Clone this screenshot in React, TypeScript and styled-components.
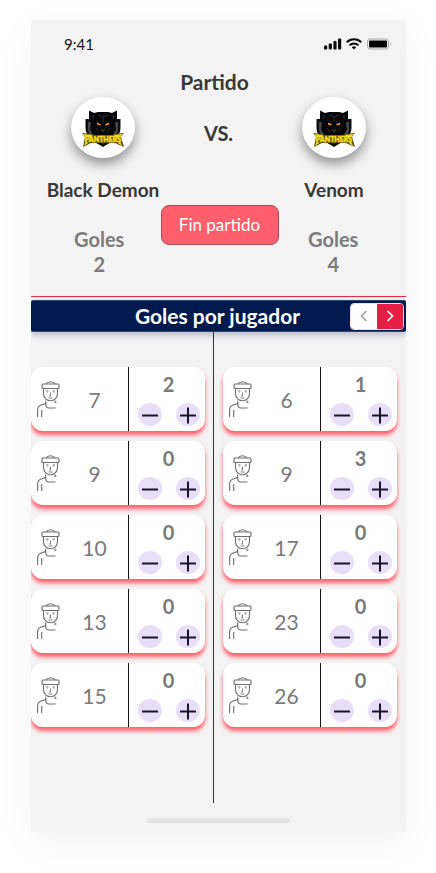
import React, { useState } from "react";
import styled, { createGlobalStyle } from "styled-components";

const GlobalStyle = createGlobalStyle`
  *, *::before, *::after { box-sizing: border-box; }
  body { margin: 0; background: #fff; font-family: Lato, "Open Sans", sans-serif; }
  button { font: inherit; cursor: pointer; }
  h1, h2, h3, p, ul { margin: 0; padding: 0; }
`;

const Page = styled.div`
  min-height: 100vh;
  padding: 20px 30px 41px 31px;
  display: flex;
`;

const Screen = styled.main`
  flex: 1;
  min-width: 0;
  display: flex;
  flex-direction: column;
  background: #f3f3f3;
  border-radius: 2px;
  box-shadow: 0 10px 40px rgba(0, 0, 0, 0.05);
  overflow: hidden;
`;

const StatusBar = styled.header`
  display: flex;
  align-items: center;
  justify-content: space-between;
  height: 44px;
  padding: 4px 14px 0 33px;
  font-size: 15px;
  line-height: 20px;
  color: #111;
`;

const StatusIcons = styled.svg`
  display: block;
  width: 68px;
  height: 14px;
`;

const Title = styled.h1`
  height: 33px;
  padding-right: 8px;
  font-size: 21px;
  line-height: 36px;
  font-weight: 700;
  text-align: center;
  color: #383838;
`;

const Teams = styled.section`
  display: grid;
  grid-template-columns: 144fr 87fr 144fr;
`;

const Team = styled.div`
  display: flex;
  flex-direction: column;
  align-items: center;
  gap: 20px;
`;

const Badge = styled.div`
  display: grid;
  place-items: center;
  width: 64px;
  height: 61px;
  border-radius: 50%;
  background: #fff;
  box-shadow: 0 6px 12px rgba(0, 0, 0, 0.4);
`;

const TeamName = styled.h2`
  font-size: 19px;
  line-height: 24px;
  font-weight: 700;
  color: #383838;
  white-space: nowrap;
`;

const Versus = styled.p`
  padding-top: 24px;
  font-size: 20px;
  line-height: 24px;
  font-weight: 700;
  text-align: center;
  color: #383838;
`;

const Scores = styled.section`
  display: grid;
  grid-template-columns: 1fr 118px 1fr;
  align-items: start;
  padding: 3px 0 19px 2px;
  border-bottom: 1px solid #e8294a;
`;

const TeamGoals = styled.p<{ $side: "home" | "away" }>`
  display: flex;
  flex-direction: column;
  padding: ${(p) => (p.$side === "home" ? "22px 0 0 5px" : "22px 18px 0 0")};
  font-size: 20px;
  line-height: 25px;
  font-weight: 700;
  text-align: center;
  color: #7b7b7b;
`;

const EndButton = styled.button`
  height: 40px;
  padding: 0;
  border: 1px solid #a84b54;
  border-radius: 8px;
  background: #ff5f6d;
  color: #fff;
  font-size: 17px;
  line-height: 24px;
`;

const SectionBar = styled.div`
  display: grid;
  grid-template-columns: 1fr auto 1fr;
  align-items: center;
  height: 32px;
  margin-top: 3px;
  padding-right: 2px;
  border: solid #33456f;
  border-width: 1px 0;
  border-radius: 2px;
  background: #001a4f;
  box-shadow: 0 3px 6px rgba(0, 20, 60, 0.25);
`;

const SectionTitle = styled.h2`
  grid-column: 2;
  font-size: 21px;
  line-height: 28px;
  font-weight: 700;
  color: #fff;
`;

const Pager = styled.div`
  display: flex;
  justify-self: end;
  border: 1px solid #f4dbe2;
  border-radius: 4px;
  overflow: hidden;
`;

const PagerButton = styled.button<{ $active?: boolean }>`
  display: grid;
  place-items: center;
  width: 26px;
  height: 25px;
  padding: 0;
  border: 0;
  background: ${(p) => (p.$active ? "#e61e43" : "#fff")};
  color: ${(p) => (p.$active ? "#fff" : "#a3a3a3")};
`;

const Lineups = styled.section`
  flex: 1;
  display: grid;
  grid-template-columns: 183fr 192fr;
`;

const Lineup = styled.ul<{ $divided?: boolean }>`
  display: flex;
  flex-direction: column;
  gap: 10px;
  padding: ${(p) => (p.$divided ? "35px 8px 72px 0" : "35px 9px 72px 9px")};
  border-right: ${(p) => (p.$divided ? "1px solid #333" : "0")};
  list-style: none;
`;

const PlayerCard = styled.li`
  display: grid;
  grid-template-columns: 98fr 76fr;
  height: 64px;
  border-radius: 12px;
  background: #fff;
  color: #7a7a7a;
  box-shadow: 0 4px 4px #ff5f6d;
`;

const Player = styled.div`
  display: grid;
  grid-template-columns: 32px 1fr;
  align-items: center;
  padding-left: 6px;
  border-right: 1px solid #111;
`;

const Shirt = styled.p`
  padding: 2px 8px 0 0;
  font-size: 21px;
  line-height: 24px;
  text-align: center;
`;

const Tally = styled.div`
  display: flex;
  flex-direction: column;
  align-items: center;
  gap: 7px;
  padding: 5px 0 0 3px;
`;

const Goals = styled.output`
  font-size: 20px;
  line-height: 24px;
  font-weight: 700;
`;

const Stepper = styled.div`
  display: flex;
  gap: 14px;
`;

const StepButton = styled.button`
  display: grid;
  place-items: center;
  width: 24px;
  height: 23px;
  padding: 0;
  border: 0;
  border-radius: 50%;
  background: #e8def8;
  color: #1d1329;
`;

const Footer = styled.footer`
  display: flex;
  justify-content: center;
  padding: 15px 0 9px;
`;

const HomeIndicator = styled.div`
  width: 38%;
  height: 5px;
  border-radius: 3px;
  background: #e4e4e4;
`;

const PantherLogo = () => (
  <svg width="44" height="40" viewBox="0 0 44 40" role="img" aria-label="Panthers">
    <path d="M4.500 11h35v9c0 9-9 14-17.500 19C13.500 34 4.500 29 4.500 20z" fill="#0c0f12" />
    <path d="M7 14h30v7c0 6-7 11-15 15C14 32 7 27 7 21z" fill="#45474a" />
    <path d="M8 2.500l5 2.500 4-1h10l4 1 5-2.500v9l-2 4 1 6-5 8-5 3h-6l-5-3-5-8 1-6-2-4z" fill="#050607" />
    <path d="M10.500 7l3 1-2 3zM33.500 7l-3 1 2 3z" fill="#25282b" />
    <path d="M17 7l5 2 5-2M22 9v5M15 20l3 4M29 20l-3 4" fill="none" stroke="#2b2e31" />
    <path d="M16 14.500l4 2-1 1-3-1zM28 14.500l-4 2 1 1 3-1z" fill="#f79a3b" />
    <path d="M19 21h6l-2 3h-2z" fill="#25282b" />
    <path d="M1 25l10 1 1 1h20l1-1 10-1-3 4 3 10-7-3-2-1H10l-2 1-6 3 2-10z" fill="#5a5018" />
    <path d="M2 26l9 1-1 2-5 0zM42 26l-9 1 1 2 5 0zM3 38l2-5 2 2zM41 38l-2-5-2 2z" fill="#f7dc19" />
    <text x="22" y="34" textAnchor="middle" fontFamily="Lato, sans-serif" fontSize="7" fontWeight="900" fill="#f7dc19" stroke="#f7dc19" strokeWidth="0.5">
      PANTHERS
    </text>
  </svg>
);

const PlayerIcon = () => (
  <svg width="24" height="38" viewBox="0 0 24 38" fill="none" stroke="#6d6d6d" strokeWidth="1.1" aria-hidden="true">
    <rect x="5" y="4" width="17" height="4.500" rx="1" />
    <path d="M9 4c1-1.700 2.500-2.300 4.500-2.300S17 2.300 18 4M6.500 8.500v5c0 4.500 3.500 7.300 7 7.300s7-2.800 7-7.300v-5" />
    <path d="M9 11h2.500M15.500 11H18M13.500 12.500V15l-1 1h1.500M11.500 18h4" strokeWidth="0.9" />
    <path d="M10 12.500h.8M16.300 12.500h.8" strokeWidth="0.7" />
    <path d="M8.700 20.500v3L4 25c-2.500 1-3.400 2.500-3.400 5v7M4.700 30v7M8.700 23.500c0 3 1 4.500 3 4.500h6.800M18 20.500v2.500M18 22h1.500" />
  </svg>
);

const Chevron = ({ direction }: { direction: "left" | "right" }) => (
  <svg width="16" height="16" viewBox="0 0 16 16" fill="none" stroke="currentColor" strokeWidth="1.7" aria-hidden="true">
    <path d={direction === "left" ? "M10.500 3L5.500 8l5 5" : "M5.500 3l5 5-5 5"} />
  </svg>
);

const StepIcon = ({ plus }: { plus?: boolean }) => (
  <svg width="18" height="18" viewBox="0 0 18 18" stroke="currentColor" strokeWidth="2" aria-hidden="true">
    <path d={plus ? "M1 9.500h16M9 1.500v16" : "M1 9.500h16"} />
  </svg>
);

const DeviceStatus = () => (
  <StatusIcons viewBox="0 0 68 14" role="img" aria-label="Señal, wifi y batería">
    <g fill="#0b0b0b">
      <rect x="0" y="8.500" width="3.200" height="4" rx="1" />
      <rect x="4.700" y="6.500" width="3.200" height="6" rx="1" />
      <rect x="9.400" y="4" width="3.200" height="8.500" rx="1" />
      <rect x="14" y="1.500" width="3.200" height="11" rx="1" />
    </g>
    <g fill="none" stroke="#0b0b0b" strokeWidth="2">
      <path d="M22.700 5.300a10.500 10.500 0 0 1 14.600 0" />
      <path d="M25.500 8.400a6.500 6.500 0 0 1 9 0" />
    </g>
    <path d="M27.800 10.300a3.300 3.300 0 0 1 4.400 0L30 12.600z" fill="#0b0b0b" />
    <rect x="43.500" y="2" width="21" height="10" rx="2.500" fill="none" stroke="#aaa" />
    <rect x="45" y="3.500" width="18" height="7" rx="1" fill="#050505" />
    <path d="M66 5.200c1.300.6 1.300 3 0 3.600z" fill="#aaa" />
  </StatusIcons>
);

type Entry = { shirt: number; goals: number };

const homePlayers: Entry[] = [
  { shirt: 7, goals: 2 },
  { shirt: 9, goals: 0 },
  { shirt: 10, goals: 0 },
  { shirt: 13, goals: 0 },
  { shirt: 15, goals: 0 },
];

const awayPlayers: Entry[] = [
  { shirt: 6, goals: 1 },
  { shirt: 9, goals: 3 },
  { shirt: 17, goals: 0 },
  { shirt: 23, goals: 0 },
  { shirt: 26, goals: 0 },
];

const total = (players: Entry[]) => players.reduce((sum, p) => sum + p.goals, 0);

type PlayerListProps = {
  players: Entry[];
  divided?: boolean;
  onChange: (players: Entry[]) => void;
};

const PlayerList = ({ players, divided, onChange }: PlayerListProps) => {
  const step = (shirt: number, delta: number) =>
    onChange(players.map((p) => (p.shirt === shirt ? { ...p, goals: Math.max(0, p.goals + delta) } : p)));

  return (
    <Lineup $divided={divided}>
      {players.map(({ shirt, goals }) => (
        <PlayerCard key={shirt}>
          <Player>
            <PlayerIcon />
            <Shirt>{shirt}</Shirt>
          </Player>
          <Tally>
            <Goals>{goals}</Goals>
            <Stepper>
              <StepButton type="button" aria-label={`Quitar gol al ${shirt}`} onClick={() => step(shirt, -1)}>
                <StepIcon />
              </StepButton>
              <StepButton type="button" aria-label={`Sumar gol al ${shirt}`} onClick={() => step(shirt, 1)}>
                <StepIcon plus />
              </StepButton>
            </Stepper>
          </Tally>
        </PlayerCard>
      ))}
    </Lineup>
  );
};

export default function App() {
  const [home, setHome] = useState(homePlayers);
  const [away, setAway] = useState(awayPlayers);

  return (
    <Page>
      <GlobalStyle />
      <Screen>
        <StatusBar>
          <time>9:41</time>
          <DeviceStatus />
        </StatusBar>
        <Title>Partido</Title>
        <Teams>
          <Team>
            <Badge><PantherLogo /></Badge>
            <TeamName>Black Demon</TeamName>
          </Team>
          <Versus>VS.</Versus>
          <Team>
            <Badge><PantherLogo /></Badge>
            <TeamName>Venom</TeamName>
          </Team>
        </Teams>
        <Scores>
          <TeamGoals $side="home"><span>Goles</span><span>{total(home)}</span></TeamGoals>
          <EndButton type="button">Fin partido</EndButton>
          <TeamGoals $side="away"><span>Goles</span><span>{total(away)}</span></TeamGoals>
        </Scores>
        <SectionBar>
          <SectionTitle>Goles por jugador</SectionTitle>
          <Pager>
            <PagerButton type="button" aria-label="Anterior"><Chevron direction="left" /></PagerButton>
            <PagerButton type="button" aria-label="Siguiente" $active><Chevron direction="right" /></PagerButton>
          </Pager>
        </SectionBar>
        <Lineups>
          <PlayerList players={home} divided onChange={setHome} />
          <PlayerList players={away} onChange={setAway} />
        </Lineups>
        <Footer><HomeIndicator /></Footer>
      </Screen>
    </Page>
  );
}
